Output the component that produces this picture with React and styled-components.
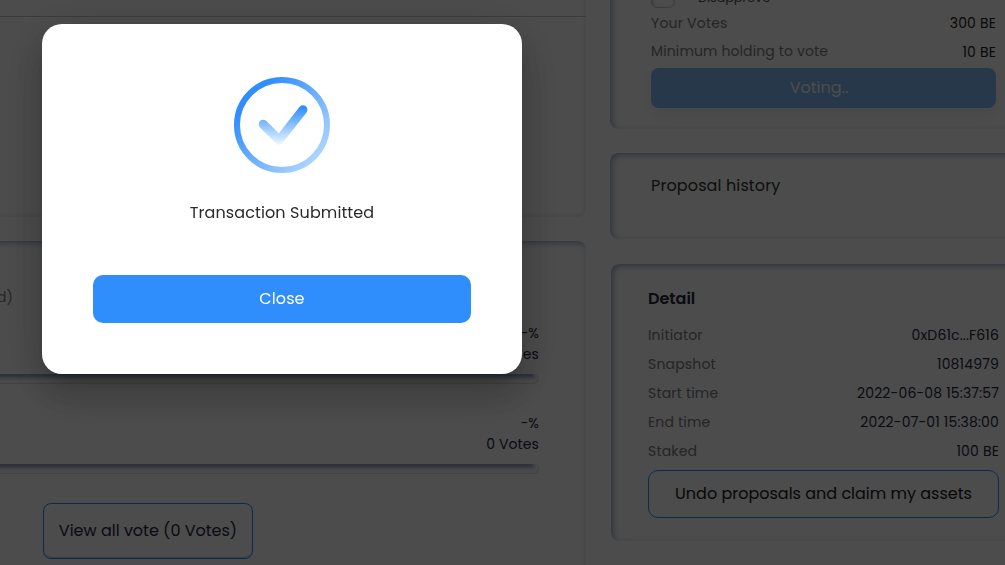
import React from 'react';
import styled, { createGlobalStyle } from 'styled-components';

const GlobalStyle = createGlobalStyle`
  *, *::before, *::after { box-sizing: border-box; }
  html, body { margin: 0; height: 100%; overflow: hidden; background: #fefefe; }
  body {
    font-family: Poppins, Inter, 'Open Sans', sans-serif;
    font-feature-settings: 'cv11';
    font-size: 14px;
    color: #26273c;
  }
  button { font: inherit; font-feature-settings: inherit; color: inherit; padding: 0; cursor: pointer; }
`;

const Page = styled.main`
  display: grid;
  grid-template-columns: 586px 426px;
  column-gap: 24px;
  width: 1005px;
  height: 565px;
  overflow: hidden;
`;

const Column = styled.div`
  display: flex;
  flex-direction: column;
  min-width: 0;
`;

const Card = styled.section`
  flex: none;
  height: ${(p) => p.$height}px;
  border-radius: 8px;
  background: #fefefe;
  box-shadow: inset -1px -1px 1px rgba(240, 242, 245, 0.8), inset 2px 2px 6px rgba(92, 124, 164, 0.6);
  clip-path: inset(0 round 8px);
`;

const DescriptionCard = styled(Card)`
  margin: -20px 0 24px -20px;
  padding-top: 36px;
`;

const Divider = styled.div`
  height: 1px;
  background: #c6c6c6;
`;

const ResultCard = styled(Card)`
  margin-left: -20px;
  padding: 45px 47px 0 17px;
`;

const VoteCard = styled(Card)`
  margin: -30px 0 24px;
  padding: 18px 40px 0 41px;
`;

const HistoryCard = styled(Card)`
  margin-bottom: 25px;
  padding: 21px 41px;
`;

const DetailCard = styled(Card)`
  margin: 0 1px;
  padding: 23px 36px 0 37px;
`;

const Text = styled.span`
  display: block;
  font-size: ${(p) => p.$size || 14}px;
  font-weight: ${(p) => p.$weight || 400};
  line-height: ${(p) => p.$line || 24}px;
  letter-spacing: ${(p) => p.$track || 0}px;
  color: ${(p) => p.$color || 'inherit'};
  white-space: nowrap;
`;

const Option = styled.label`
  display: flex;
  align-items: center;
  gap: 23px;
  height: 20px;
`;

const CheckSquare = styled.span`
  width: 24px;
  height: 24px;
  margin-top: -4px;
  border: 1px solid #c4c8d0;
  border-radius: 6px;
  box-shadow: inset 1px 1px 3px rgba(90, 112, 146, 0.4);
`;

const Row = styled.div`
  display: flex;
  align-items: center;
  justify-content: space-between;
  height: ${(p) => p.$height}px;
`;

const MinimumLabel = styled.div`
  padding-bottom: 2px;
`;

const VotingButton = styled.button`
  display: block;
  width: 100%;
  height: 40px;
  margin-top: 2px;
  border: 0;
  border-radius: 8px;
  background: #82bbf7;
  box-shadow: 0 6px 16px rgba(0, 0, 0, 0.06);
  text-align: center;
`;

const VotingLabel = styled.span`
  display: block;
  margin-right: 9px;
`;

const OutlineButton = styled.button`
  display: block;
  width: ${(p) => p.$width};
  height: ${(p) => p.$height}px;
  border: 1px solid #308dfc;
  border-radius: ${(p) => p.$radius}px;
  background: transparent;
  box-shadow: ${(p) => (p.$raised ? 'inset 0 -1px 1px rgba(48, 141, 252, 0.4)' : 'none')};
  text-align: center;
`;

const DetailTitle = styled.div`
  height: 33px;
`;

const DetailAction = styled.div`
  padding-top: 5px;
`;

const Result = styled.div`
  display: flex;
  flex-direction: column;
  align-items: flex-end;
  height: 90px;
`;

const Track = styled.div`
  align-self: stretch;
  height: 10px;
  margin: 9px 0 0 -17px;
  border-radius: 5px;
  background: #fefefe;
  box-shadow: inset -1px -1px 1px rgba(205, 208, 214, 0.7), inset -4px -1px 3px #fbfbfb,
    inset 2px 3px 5px rgba(70, 100, 145, 0.75);
  clip-path: inset(0 round 5px);
`;

const ResultList = styled.div`
  padding-top: 15px;
`;

const ViewAll = styled.div`
  padding-left: 46px;
`;

const Overlay = styled.div`
  position: fixed;
  inset: 0;
  padding: 24px 0 0 42px;
  background: rgba(0, 0, 0, 0.7);
`;

const Dialog = styled.div`
  display: flex;
  flex-direction: column;
  align-items: center;
  width: 480px;
  height: 350px;
  padding: 53px 51px 51px;
  border-radius: 20px;
  background: #fff;
  box-shadow: 0 11px 15px -7px rgba(0, 0, 0, 0.2), 0 24px 38px 3px rgba(0, 0, 0, 0.14),
    0 9px 46px 8px rgba(0, 0, 0, 0.12);
`;

const DialogMessage = styled.div`
  padding: 27px 0 50px;
`;

const CloseButton = styled.button`
  width: 100%;
  height: 48px;
  border: 0;
  border-radius: 10px;
  background: #308dfc;
  text-align: center;
`;

const SuccessIcon = () => (
  <svg width="96" height="96" viewBox="0 0 96 96" fill="none">
    <defs>
      <linearGradient id="ring" x1="18" y1="22" x2="84" y2="84" gradientUnits="userSpaceOnUse">
        <stop stopColor="#308dfc" />
        <stop offset="1" stopColor="#b0d6ff" />
      </linearGradient>
      <linearGradient id="tick" x1="48" y1="30" x2="48" y2="66" gradientUnits="userSpaceOnUse">
        <stop stopColor="#308dfc" />
        <stop offset="1" stopColor="#e6f3ff" />
      </linearGradient>
    </defs>
    <circle cx="48" cy="48" r="45" stroke="url(#ring)" strokeWidth="6" />
    <path d="M29.2 47.2L45.2 63L69 32.8" stroke="url(#tick)" strokeWidth="9" strokeLinecap="round" strokeLinejoin="round" />
  </svg>
);

const details = [
  { label: 'Initiator', value: '0xD61c...F616' },
  { label: 'Snapshot', value: '10814979' },
  { label: 'Start time', value: '2022-06-08 15:37:57' },
  { label: 'End time', value: '2022-07-01 15:38:00' },
  { label: 'Staked', value: '100 BE' },
];

const results = [1, 2];

export default function App() {
  return (
    <>
      <GlobalStyle />
      <Page>
        <Column>
          <DescriptionCard $height={237}>
            <Divider />
          </DescriptionCard>
          <ResultCard $height={360}>
            <Text $line={22} $color="#888">d)</Text>
            <ResultList>
              {results.map((id) => (
                <Result key={id}>
                  <Text $line={21}>-%</Text>
                  <Text $line={21} $track={0.1}>0 Votes</Text>
                  <Track />
                </Result>
              ))}
            </ResultList>
            <ViewAll>
              <OutlineButton $width="210px" $height={56} $radius={8} $raised>
                <Text $size={16}>View all vote (0 Votes)</Text>
              </OutlineButton>
            </ViewAll>
          </ResultCard>
        </Column>
        <Column>
          <VoteCard $height={159}>
            <Option>
              <CheckSquare />
              <Text $size={13} $line={20} $track={-0.2} $color="#555">Disapprove</Text>
            </Option>
            <Row $height={30}>
              <Text $track={0.2} $color="#7c7c7c">Your Votes</Text>
              <Text $track={0.15} $line={26} $color="#222">300 BE</Text>
            </Row>
            <Row $height={28}>
              <MinimumLabel>
                <Text $track={0.12} $line={22} $color="#7c7c7c">Minimum holding to vote</Text>
              </MinimumLabel>
              <Text $track={0.15} $color="#222">10 BE</Text>
            </Row>
            <VotingButton>
              <VotingLabel>
                <Text $size={16} $color="#fefefe">Voting..</Text>
              </VotingLabel>
            </VotingButton>
          </VoteCard>
          <HistoryCard $height={86}>
            <Text $size={16} $track={0.12} $color="#333">Proposal history</Text>
          </HistoryCard>
          <DetailCard $height={277}>
            <DetailTitle>
              <Text $size={16} $weight={600}>Detail</Text>
            </DetailTitle>
            {details.map((d) => (
              <Row $height={29} key={d.label}>
                <Text $track={0.18} $color="#7c7c7c">{d.label}</Text>
                <Text $track={0.16}>{d.value}</Text>
              </Row>
            ))}
            <DetailAction>
              <OutlineButton $width="100%" $height={48} $radius={10}>
                <Text $size={16} $color="#1a1a1a">Undo proposals and claim my assets</Text>
              </OutlineButton>
            </DetailAction>
          </DetailCard>
        </Column>
      </Page>
      <Overlay>
        <Dialog role="dialog">
          <SuccessIcon />
          <DialogMessage>
            <Text $size={16} $line={25} $track={0.1} $color="#2a2a2a">Transaction Submitted</Text>
          </DialogMessage>
          <CloseButton>
            <Text $size={16} $track={0.1} $color="#fff">Close</Text>
          </CloseButton>
        </Dialog>
      </Overlay>
    </>
  );
}
